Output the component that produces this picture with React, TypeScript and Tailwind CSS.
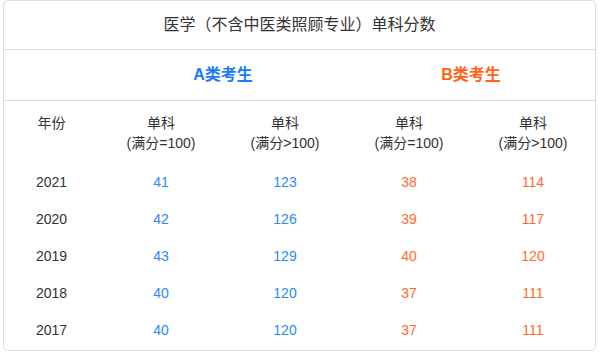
const ROWS = [
  { year: "2021", a1: "41", a2: "123", b1: "38", b2: "114" },
  { year: "2020", a1: "42", a2: "126", b1: "39", b2: "117" },
  { year: "2019", a1: "43", a2: "129", b1: "40", b2: "120" },
  { year: "2018", a1: "40", a2: "120", b1: "37", b2: "111" },
  { year: "2017", a1: "40", a2: "120", b1: "37", b2: "111" },
];

const FONT = { fontFamily: '"Liberation Sans", Arial, "Noto Sans CJK SC", sans-serif' };

export default function App() {
  return (
    <div className="bg-white w-[599px] h-[355px] pl-[3px]" style={FONT}>
      <div className="w-[593px] h-[351px] border border-[#dcdcdc] rounded-[5px] text-[#333] text-[14px]">
        <div className="h-[49px] flex items-center justify-center text-[16px] border-b border-[#dcdcdc]">
          医学（不含中医类照顾专业）单科分数
        </div>
        <div className="h-[51px] grid grid-cols-[95px_1fr_1fr] items-center border-b border-[#dcdcdc] text-[16px] font-bold">
          <div />
          <div className="text-center text-[#1a7df8]">A类考生</div>
          <div className="text-center text-[#ff6417]">B类考生</div>
        </div>
        <div className="grid grid-cols-[95px_repeat(4,1fr)] text-center">
          <div className="h-[63px] flex flex-col justify-center leading-[20px]">
            <span>年份</span>
            <span className="h-[20px]" />
          </div>
          <div className="h-[63px] flex flex-col justify-center leading-[20px]">
            <span>单科</span>
            <span>(满分=100)</span>
          </div>
          <div className="h-[63px] flex flex-col justify-center leading-[20px]">
            <span>单科</span>
            <span>(满分&gt;100)</span>
          </div>
          <div className="h-[63px] flex flex-col justify-center leading-[20px]">
            <span>单科</span>
            <span>(满分=100)</span>
          </div>
          <div className="h-[63px] flex flex-col justify-center leading-[20px]">
            <span>单科</span>
            <span>(满分&gt;100)</span>
          </div>
          {ROWS.map((r) => (
            <div key={r.year} className="contents">
              <div className="h-[37px] flex items-center justify-center">{r.year}</div>
              <div className="h-[37px] flex items-center justify-center text-[#2f86f6]">{r.a1}</div>
              <div className="h-[37px] flex items-center justify-center text-[#2f86f6]">{r.a2}</div>
              <div className="h-[37px] flex items-center justify-center text-[#ff6a2a]">{r.b1}</div>
              <div className="h-[37px] flex items-center justify-center text-[#ff6a2a]">{r.b2}</div>
            </div>
          ))}
        </div>
      </div>
    </div>
  );
}
